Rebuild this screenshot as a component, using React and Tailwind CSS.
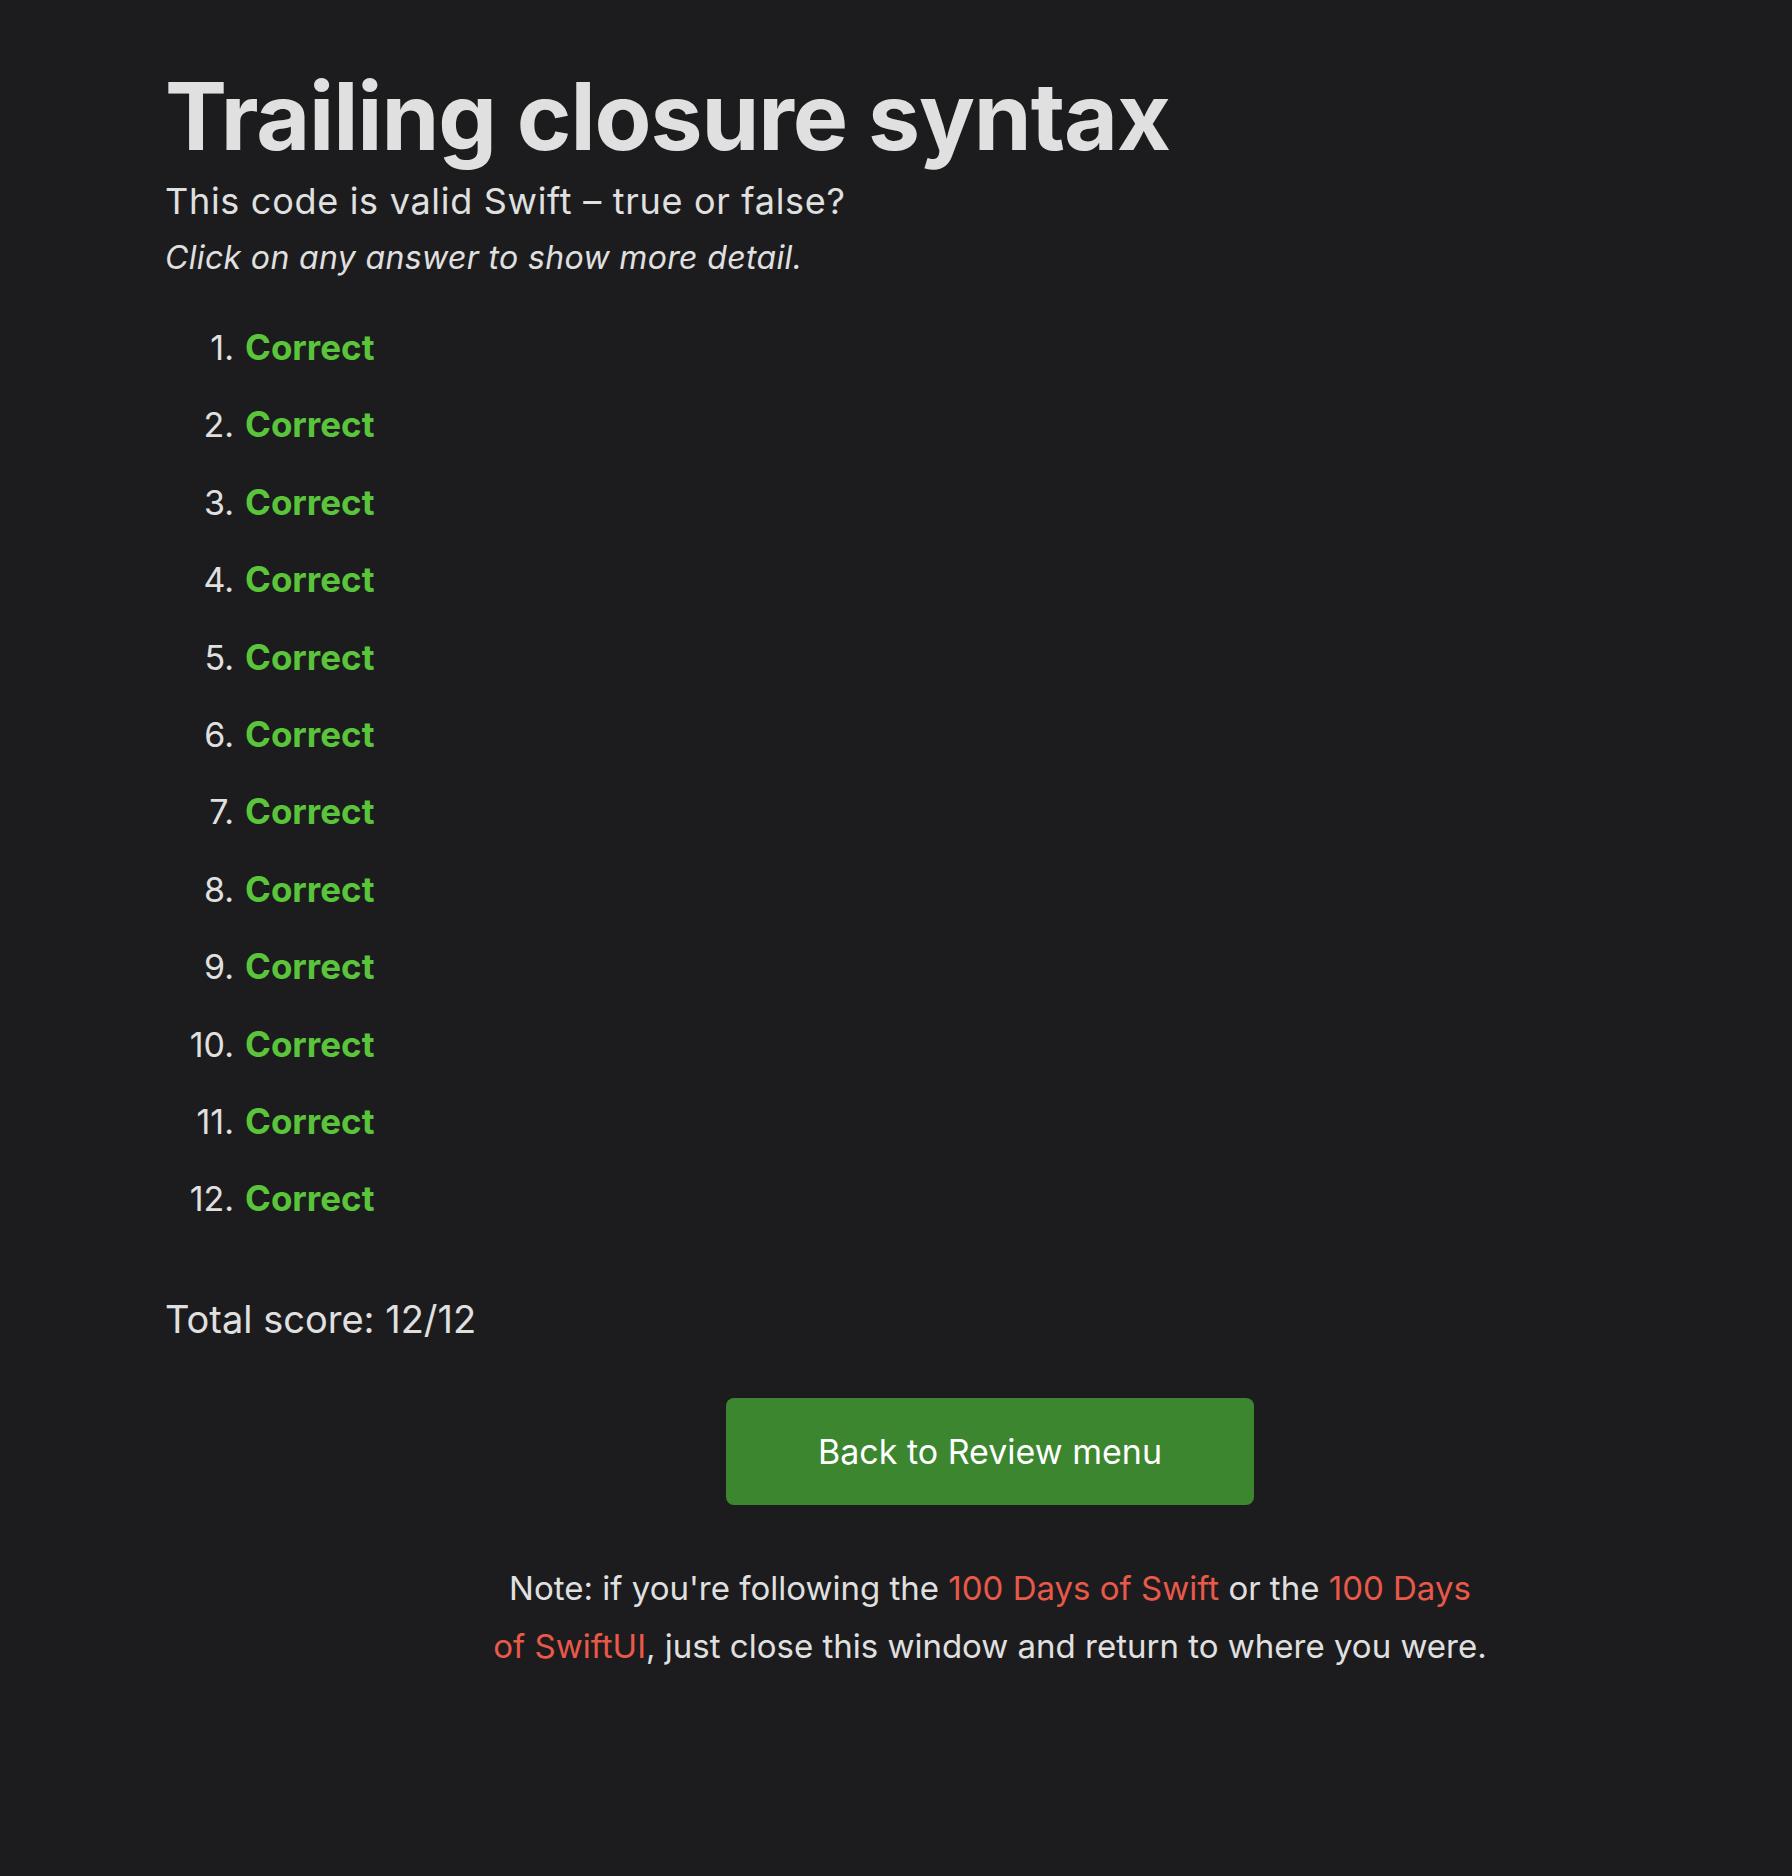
export default function App() {
  const items = Array.from({ length: 12 }, (_, i) => i + 1);

  return (
    <div className="min-h-[1876px] bg-[#1c1c1e] text-[#e0e0e0] font-['Inter',sans-serif] pl-[165px] pt-[66px]">
      {/* Heading */}
      <h1 className="text-[93px] leading-[100px] font-bold tracking-[-1.1px]">Trailing closure syntax</h1>
      <p className="mt-[15px] text-[36px] leading-[40px] tracking-[0.7px]">This code is valid Swift – true or false?</p>
      <p className="mt-[17px] text-[32px] leading-[40px] italic tracking-[0.35px]">Click on any answer to show more detail.</p>

      {/* Answers */}
      <ol className="mt-[31px]">
        {items.map((n) => (
          <li key={n} className="flex text-[34px] leading-[77.4px]">
            <span className="w-[69px] text-right">{n}.</span>
            <span className="ml-[11px] text-[35px] font-bold text-[#5ac43b]">Correct</span>
          </li>
        ))}
      </ol>

      <p className="mt-[58px] text-[38px] leading-[46px]">Total score: 12/12</p>

      {/* Footer */}
      <div className="w-[1100px] ml-[275px] mt-[56px] flex flex-col items-center">
        <button className="w-[528px] h-[107px] rounded-[8px] bg-[#3c8630] text-white text-[34px]">
          Back to Review menu
        </button>
        <p className="mt-[54px] text-center text-[33px] leading-[58px]">
          Note: if you're following the <a className="text-[#e9594a]">100 Days of Swift</a> or the{' '}
          <a className="text-[#e9594a]">100 Days<br />of SwiftUI</a>, just close this window and return to where you were.
        </p>
      </div>
    </div>
  );
}
